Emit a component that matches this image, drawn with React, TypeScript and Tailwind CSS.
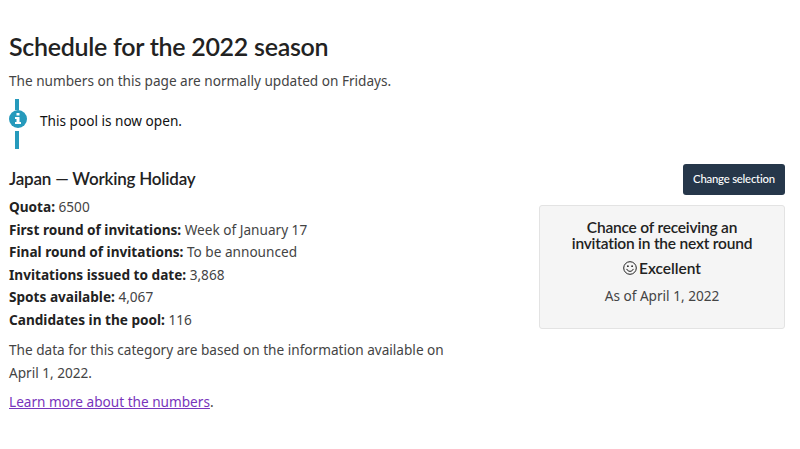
import React from 'react';

const details = [
  { label: 'Quota:', value: '6500' },
  { label: 'First round of invitations:', value: 'Week of January 17' },
  { label: 'Final round of invitations:', value: 'To be announced' },
  { label: 'Invitations issued to date:', value: '3,868' },
  { label: 'Spots available:', value: '4,067' },
  { label: 'Candidates in the pool:', value: '116' },
];

export default function App() {
  return (
    <main className="h-[449px] overflow-hidden bg-white pl-[9px] pr-[15px] pt-8 font-['Noto_Sans',sans-serif] text-[13.62px] leading-[22.6px] text-[#444]">
      <h1 className="font-[Lato,sans-serif] text-[25px] font-semibold leading-7 tracking-[-0.28px] text-[#222]">Schedule for the 2022 season</h1>
      <p className="mt-[10px]">The numbers on this page are normally updated on Fridays.</p>

      {/* Pool status */}
      <div className="mt-[6.4px] flex h-[50px] items-center">
        <div className="flex h-full w-[18px] flex-col items-center">
          <span className="mr-0.5 h-[11px] w-1 bg-[#269abc]" />
          <InfoIcon />
          <span className="mr-0.5 mt-[3px] h-[18px] w-1 bg-[#269abc]" />
        </div>
        <p className="ml-[13px] pb-[5.4px] text-[#111]">This pool is now open.</p>
      </div>

      <div className="mt-[14.6px] flex justify-between">
        <section className="w-[450px]">
          <h2 className="mt-[4px] font-[Lato,sans-serif] text-[17px] font-semibold leading-[22px] tracking-[-0.2px] text-[#222]">Japan — Working Holiday</h2>
          <ul className="mt-[6.4px]">
            {details.map((d) => (
              <li key={d.label}>
                <strong className="text-[#222]">{d.label}</strong> {d.value}
              </li>
            ))}
          </ul>
          <p className="mt-[7.5px]">The data for this category are based on the information available on April 1, 2022.</p>
          <p className="mt-[7px]">
            <a href="#" className="text-[#7834bc] underline">Learn more about the numbers</a>.
          </p>
        </section>

        <aside className="flex w-[246px] flex-col items-end">
          <button className="h-[31px] w-[102px] rounded-[3px] bg-[#26374a] font-[Lato,sans-serif] text-[11.3px] font-medium tracking-[-0.2px] text-white">Change selection</button>
          <div className="mt-[10px] h-[124px] w-full rounded-[3px] border border-[#e3e3e3] bg-[#f5f5f5] pt-[13px] text-center">
            <h3 className="font-[Lato,sans-serif] text-[15.5px] font-semibold leading-4 tracking-[-0.2px] text-[#222]">
              Chance of receiving an
              <br />
              invitation in the next round
            </h3>
            <p className="mt-[8px] flex items-center justify-center gap-0.5 font-[Lato,sans-serif] text-[15.5px] font-semibold leading-[18px] text-[#222]">
              <SmileIcon />
              Excellent
            </p>
            <p className="mt-[8px]">As of April 1, 2022</p>
          </div>
        </aside>
      </div>
    </main>
  );
}

function InfoIcon() {
  return (
    <svg width="18" height="18" viewBox="0 0 18 18" className="shrink-0">
      <circle cx="9" cy="9" r="9" fill="#269abc" />
      <path d="M7.5 3h3v2.5h-3zM6 7h4.5v5H12v2H6v-2h1.5V9H6z" fill="#fff" />
    </svg>
  );
}

function SmileIcon() {
  return (
    <svg width="14" height="14" viewBox="0 0 14 14" fill="none" stroke="#222">
      <circle cx="7" cy="7" r="6.3" strokeWidth="1" />
      <circle cx="4.9" cy="5.2" r="0.9" fill="#222" stroke="none" />
      <circle cx="9.1" cy="5.2" r="0.9" fill="#222" stroke="none" />
      <path d="M3.8 8.3c1 2.8 5.4 2.8 6.4 0" strokeWidth="1" strokeLinecap="round" />
    </svg>
  );
}
